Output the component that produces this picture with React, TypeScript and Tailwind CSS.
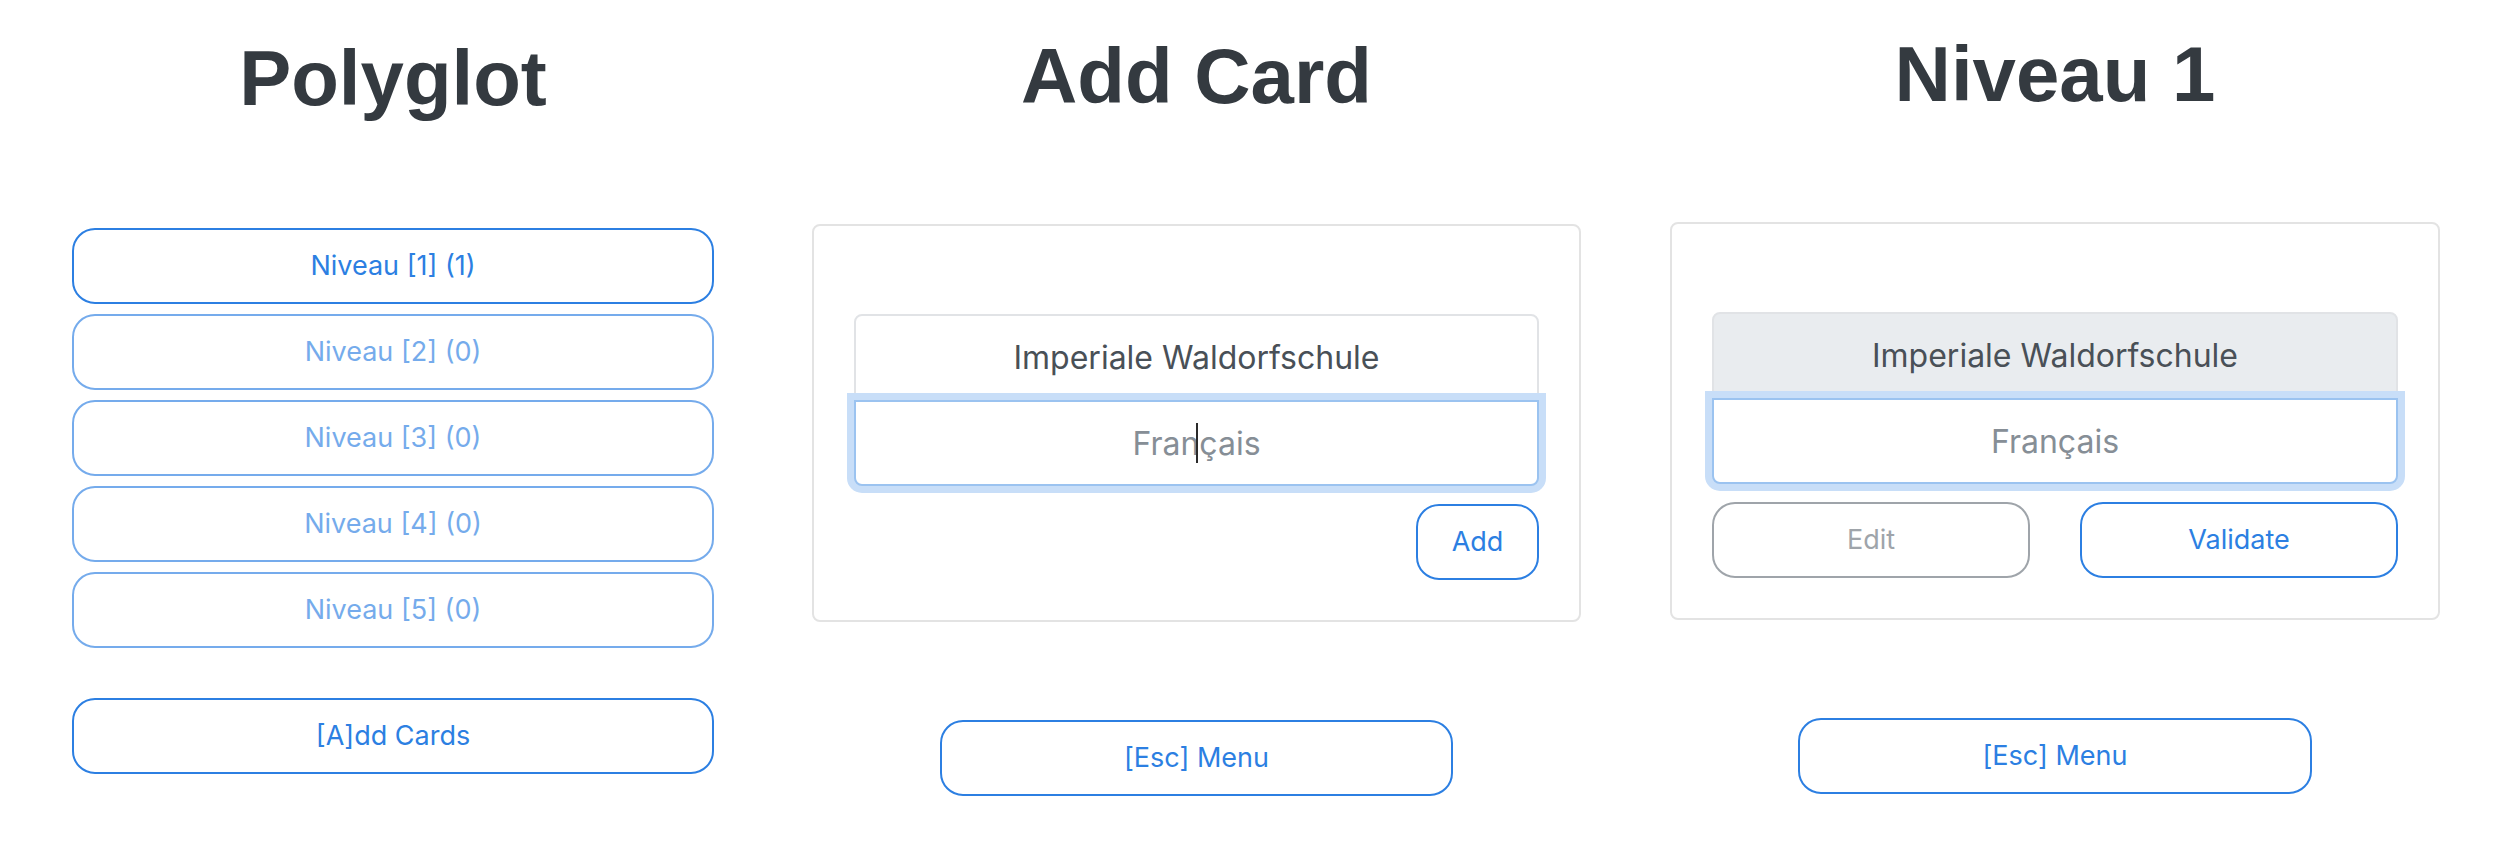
import React from 'react';

const levels = [
  { label: 'Niveau [1] (1)', enabled: true },
  { label: 'Niveau [2] (0)', enabled: false },
  { label: 'Niveau [3] (0)', enabled: false },
  { label: 'Niveau [4] (0)', enabled: false },
  { label: 'Niveau [5] (0)', enabled: false },
];

const body = "font-['Inter','Noto_Sans',sans-serif]";
const heading = "font-['Liberation_Sans','Arial',sans-serif] font-bold text-[78px] leading-none text-[#343a40]";

const PillButton: React.FC<{ label: string; className?: string; disabled?: boolean; tone?: 'primary' | 'secondary' }> = ({
  label,
  className = '',
  disabled = false,
  tone = 'primary',
}) => (
  <button
    type="button"
    className={`${body} h-[76px] flex items-center justify-center rounded-[23px] border-2 bg-white text-[27px] ${
      tone === 'primary' ? 'border-[#2c7fe2] text-[#2c7fe2]' : 'border-[#6c757d] text-[#6c757d]'
    } ${disabled ? 'opacity-65' : ''} ${className}`}
  >
    {label}
  </button>
);

const CardInputs: React.FC<{ readOnlyTop?: boolean; caret?: boolean }> = ({ readOnlyTop = false, caret = false }) => (
  <div className="flex flex-col">
    <input
      readOnly
      value="Imperiale Waldorfschule"
      className={`${body} h-[86px] w-full rounded-t-[8px] border-2 border-[#e1e3e6] text-center text-[32px] text-[#495057] outline-none ${
        readOnlyTop ? 'bg-[#e9ecef]' : 'bg-white'
      }`}
    />
    <div className="relative z-10">
      <input
        readOnly
        placeholder="Français"
        className={`${body} h-[86px] w-full rounded-b-[8px] border-2 border-[#9bc3f0] bg-white text-center text-[32px] text-[#495057] outline-none shadow-[0_0_0_7px_#c8def8] placeholder:text-[#868e96]`}
      />
      {caret && (
        <span className="absolute left-1/2 top-1/2 h-[40px] w-[2px] -translate-x-1/2 -translate-y-1/2 bg-[#2b2b2b]" />
      )}
    </div>
  </div>
);

export default function App() {
  return (
    <div className="flex h-[844px] w-[2520px] bg-white">
      {/* menu */}
      <div className="flex w-[786px] flex-col items-center">
        <h1 className={`${heading} pt-[39px]`}>Polyglot</h1>
        <div className="mt-[111px] flex w-[642px] flex-col gap-[10px]">
          {levels.map((lvl) => (
            <PillButton key={lvl.label} label={lvl.label} disabled={!lvl.enabled} />
          ))}
        </div>
        <PillButton label="[A]dd Cards" className="mt-[50px] w-[642px]" />
      </div>

      {/* add card */}
      <div className="flex w-[821px] flex-col items-center">
        <h1 className={`${heading} pt-[37px]`}>Add Card</h1>
        <div className="mt-[109px] flex w-[769px] flex-col rounded-[8px] border-2 border-[#e3e3e3] px-[40px] pb-[40px] pt-[88px]">
          <CardInputs caret />
          <PillButton label="Add" className="mt-[18px] w-[123px] self-end" />
        </div>
        <PillButton label="[Esc] Menu" className="mt-[98px] w-[513px]" />
      </div>

      {/* level review */}
      <div className="flex w-[896px] flex-col items-center">
        <h1 className={`${heading} pt-[35px]`}>Niveau 1</h1>
        <div className="mt-[109px] flex w-[770px] flex-col rounded-[8px] border-2 border-[#e3e3e3] px-[40px] pb-[40px] pt-[88px]">
          <CardInputs readOnlyTop />
          <div className="mt-[18px] grid grid-cols-2 gap-[50px]">
            <PillButton label="Edit" tone="secondary" disabled />
            <PillButton label="Validate" />
          </div>
        </div>
        <PillButton label="[Esc] Menu" className="mt-[98px] w-[514px]" />
      </div>
    </div>
  );
}
